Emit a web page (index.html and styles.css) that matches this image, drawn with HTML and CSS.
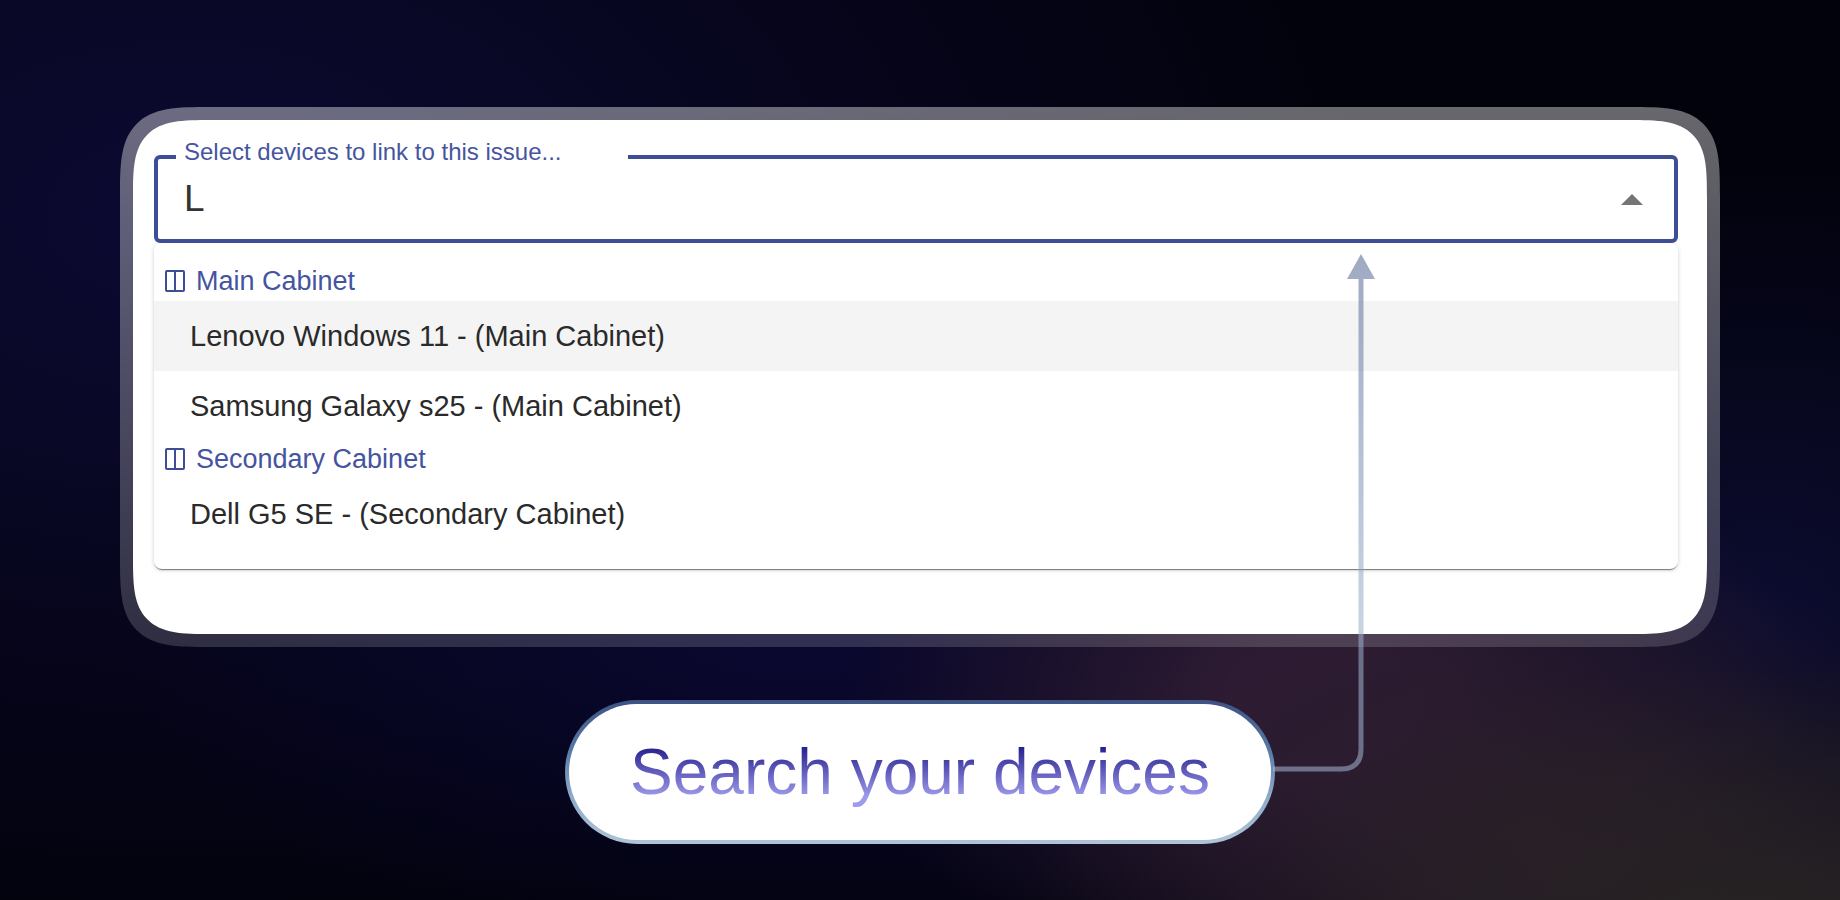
FILE: index.html
```
<!DOCTYPE html>
<html lang="en">
<head>
    <meta charset="UTF-8">
    <meta name="viewport" content="width=device-width, initial-scale=1.0">
    <title>Search your devices</title>

    <link rel="stylesheet" href="styles.css">
</head>
<body>

    <main class="stage">
        <div class="frame">
            <div class="card">
                <div class="field">
                    <label class="field-label" for="devices">Select devices to link to this issue...</label>
                    <input class="field-input" id="devices" type="text" value="L" autocomplete="off">
                    <button class="field-toggle" type="button" aria-label="Close">
                        <svg width="22" height="11" viewBox="0 0 22 11"><path d="M0 11 11 0l11 11z" fill="#757575"/></svg>
                    </button>
                </div>
                <div class="dropdown">
                    <h2 class="group-title">
                        <svg class="group-icon" viewBox="0 0 20 22"><rect x="1" y="1" width="18" height="20" rx="1"/><path d="M10 1v20"/></svg>
                        Main Cabinet
                    </h2>
                    <ul class="options">
                        <li class="option option-active">Lenovo Windows 11 - (Main Cabinet)</li>
                        <li class="option">Samsung Galaxy s25 - (Main Cabinet)</li>
                    </ul>
                    <h2 class="group-title">
                        <svg class="group-icon" viewBox="0 0 20 22"><rect x="1" y="1" width="18" height="20" rx="1"/><path d="M10 1v20"/></svg>
                        Secondary Cabinet
                    </h2>
                    <ul class="options">
                        <li class="option">Dell G5 SE - (Secondary Cabinet)</li>
                    </ul>
                </div>
            </div>
        </div>

        <div class="callout">
            <p class="callout-text">Search your devices</p>
            <svg class="callout-arrow" width="104" height="518" viewBox="0 0 104 518">
                <defs>
                    <linearGradient id="arrow-fill" gradientUnits="userSpaceOnUse" x1="0" y1="0" x2="0" y2="518">
                        <stop offset="0" stop-color="#566994"/>
                        <stop offset="0.7" stop-color="#99b0cd"/>
                        <stop offset="1" stop-color="#a2b4cf"/>
                    </linearGradient>
                </defs>
                <g opacity="0.56">
                    <path d="M90 25V495Q90 515 70 515H2" fill="none" stroke="url(#arrow-fill)" stroke-width="5"/>
                    <path d="M90 0 104 25H76z" fill="url(#arrow-fill)"/>
                </g>
            </svg>
        </div>
    </main>

</body>
</html>
```
FILE: styles.css
```
* {
    padding: 0;
    margin: 0;
    box-sizing: border-box;
}

body {
    min-height: 100vh;

    font-family: "Liberation Sans", Arial, sans-serif;

    background-color: #02020c;
    background-image:
        radial-gradient(ellipse 30% 30% at 96% 104%, #282423 0%, #28242300 100%),
        radial-gradient(ellipse 28% 32% at 84% 94%, #2a1d2a 0%, #2a1d2a00 100%),
        radial-gradient(ellipse 26% 36% at 72% 78%, #2d1b34 20%, #2d1b3400 100%),
        radial-gradient(ellipse 38% 40% at 44% 68%, #0a0832 0%, #0a083200 100%),
        radial-gradient(ellipse 30% 50% at 96% 68%, #0c0c30 0%, #0c0c3000 100%),
        radial-gradient(ellipse 64% 80% at 10% 24%, #0c0a32 0%, #0c0a3200 100%);
}

.stage {
    padding: 107px 120px 56px;

    display: flex;
    flex-direction: column;
    align-items: center;
    gap: 53px;
}

.frame {
    width: 100%;
    padding: 13px;

    background: linear-gradient(to bottom, #fff6, #ffffff29);
    border-radius: 54px;
}

.card {
    padding: 35px 29px 65px 21px;

    background-color: white;
    border-radius: 48px;
}

/* squircle corners need a longer radius than round ones */
@supports (corner-shape: squircle) {
    .frame {
        border-radius: 90px;
        corner-shape: superellipse(1.75);
    }

    .card {
        border-radius: 78px;
        corner-shape: superellipse(1.75);
    }
}

.field {
    position: relative;

    display: flex;
    align-items: center;

    border: 4px solid #3d4d96;
    border-radius: 6px;
}

/* sits over the border and cuts the notch in it */
.field-label {
    width: 452px;
    padding-left: 8px;

    position: absolute;
    top: -19px;
    left: 18px;

    background-color: white;

    font-size: 24px;
    line-height: 24px;
    color: #4655a0;
}

.field-input {
    flex: 1;
    min-width: 0;
    height: 80px;
    padding: 0 26px;

    background: none;
    border: none;
    outline: none;

    font-family: inherit;
    font-size: 37px;
    color: #333;
}

.field-toggle {
    padding: 16px 31px;

    display: flex;

    background: none;
    border: none;
    cursor: pointer;
}

.dropdown {
    padding: 20px 0;

    border-radius: 8px;
    box-shadow: 0 2px 1px -1px #0007, 0 1px 4px #0003;
    clip-path: inset(0 -8px -8px);
}

.group-title {
    padding-left: 11px;

    display: flex;
    align-items: center;
    gap: 11px;

    font-size: 27px;
    font-weight: normal;
    line-height: 36px;
    color: #4454a0;
}

.group-icon {
    width: 20px;
    height: 22px;

    fill: none;
    stroke: #3d4d96;
    stroke-width: 2;
}

.options {
    padding-top: 2px;

    list-style: none;
}

.option {
    padding-left: 36px;

    font-size: 29px;
    line-height: 70px;
    color: #2a2a2a;
}

.option-active {
    background-color: #f4f4f4;
}

.callout {
    padding: 32px 61px;

    position: relative;

    background:
        linear-gradient(white, white) padding-box,
        linear-gradient(to bottom, #3d5282, #587aa8 35%, #8ba8c8 65%, #b0c4d8) border-box;
    border: 4px solid transparent;
    border-radius: 72px;
}

.callout-text {
    background: linear-gradient(to bottom, #1d1786 10%, #9f9bec 85%);
    background-clip: text;

    font-size: 64px;
    line-height: 72px;
    color: transparent;
}

.callout-arrow {
    position: absolute;
    bottom: 68px;
    left: 100%;

    pointer-events: none;
}
```
